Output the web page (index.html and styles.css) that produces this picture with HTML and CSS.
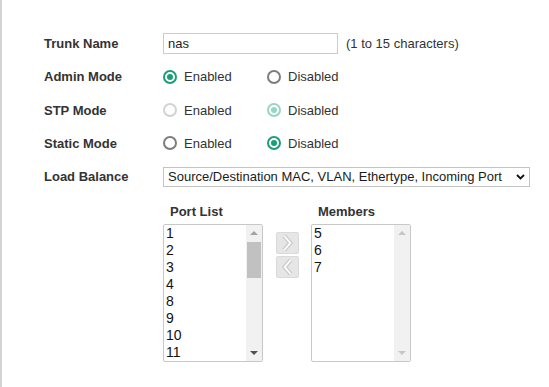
FILE: index.html
```html
<!DOCTYPE html>
<html lang="en">
<head>
    <meta charset="UTF-8">
    <meta name="viewport" content="width=device-width, initial-scale=1.0">
    <title>Trunk Settings</title>
    <link rel="stylesheet" href="styles.css">
</head>
<body>

<div class="page">
    <form class="trunk-form">
        <div class="row">
            <label class="row-label" for="trunk-name">Trunk Name</label>
            <div class="row-field">
                <input type="text" id="trunk-name" class="text-input" value="nas">
                <span class="hint">(1 to 15 characters)</span>
            </div>
        </div>

        <div class="row">
            <span class="row-label">Admin Mode</span>
            <div class="row-field">
                <label class="radio"><span class="radio-dot checked"></span>Enabled</label>
                <label class="radio"><span class="radio-dot"></span>Disabled</label>
            </div>
        </div>

        <div class="row">
            <span class="row-label">STP Mode</span>
            <div class="row-field">
                <label class="radio"><span class="radio-dot faded"></span>Enabled</label>
                <label class="radio"><span class="radio-dot checked faded"></span>Disabled</label>
            </div>
        </div>

        <div class="row">
            <span class="row-label">Static Mode</span>
            <div class="row-field">
                <label class="radio"><span class="radio-dot"></span>Enabled</label>
                <label class="radio"><span class="radio-dot checked"></span>Disabled</label>
            </div>
        </div>

        <div class="row">
            <label class="row-label" for="load-balance">Load Balance</label>
            <div class="row-field">
                <div class="select-wrap">
                    <select id="load-balance" class="select">
                        <option>Source/Destination MAC, VLAN, Ethertype, Incoming Port</option>
                    </select>
                    <svg class="select-arrow" width="9" height="6" viewBox="0 0 9 6">
                        <path d="M1 1 L4.5 4.5 L8 1" fill="none" stroke="#111" stroke-width="1.8"/>
                    </svg>
                </div>
            </div>
        </div>

        <!-- Port list / members transfer -->
        <div class="transfer">
            <div class="list-col">
                <div class="list-title">Port List</div>
                <div class="list-box">
                    <ul class="list-items">
                        <li>1</li>
                        <li>2</li>
                        <li>3</li>
                        <li>4</li>
                        <li>8</li>
                        <li>9</li>
                        <li>10</li>
                        <li>11</li>
                    </ul>
                    <div class="scrollbar">
                        <span class="scroll-up"></span>
                        <span class="scroll-thumb"></span>
                        <span class="scroll-down"></span>
                    </div>
                </div>
            </div>

            <div class="move-buttons">
                <button type="button" class="move-btn" disabled>
                    <svg width="22" height="22" viewBox="0 0 22 22">
                        <path d="M7.5 3.5 L14 11 L7.5 18.5" fill="none" stroke="#c9c9c9" stroke-width="4.5"/>
                        <path d="M7.5 3.5 L14 11 L7.5 18.5" fill="none" stroke="#fafafa" stroke-width="2"/>
                    </svg>
                </button>
                <button type="button" class="move-btn" disabled>
                    <svg width="22" height="22" viewBox="0 0 22 22">
                        <path d="M14.5 3.5 L8 11 L14.5 18.5" fill="none" stroke="#c9c9c9" stroke-width="4.5"/>
                        <path d="M14.5 3.5 L8 11 L14.5 18.5" fill="none" stroke="#fafafa" stroke-width="2"/>
                    </svg>
                </button>
            </div>

            <div class="list-col">
                <div class="list-title">Members</div>
                <div class="list-box">
                    <ul class="list-items">
                        <li>5</li>
                        <li>6</li>
                        <li>7</li>
                    </ul>
                    <div class="scrollbar inactive">
                        <span class="scroll-up"></span>
                        <span class="scroll-down"></span>
                    </div>
                </div>
            </div>
        </div>
    </form>
</div>

</body>
</html>
```

FILE: styles.css
```css
body {
    margin: 0;
    font-family: "Liberation Sans", Arial, sans-serif;
    font-size: 13px;
    color: #333;
    background-color: #ffffff;
}
.page {
    border-left: 2px solid #d4d4d4;
    min-height: 100vh;
    box-sizing: border-box;
}
.trunk-form {
    padding: 27px 0 0 42px;
}
.row {
    display: flex;
    align-items: center;
    height: 33.25px;
}
.row-label {
    width: 119px;
    flex-shrink: 0;
    font-weight: bold;
    color: #333;
}
.row-field {
    display: flex;
    align-items: center;
}
.text-input {
    width: 175px;
    height: 21px;
    box-sizing: border-box;
    border: 1px solid #cccccc;
    padding: 0 4px;
    font-family: inherit;
    font-size: 13px;
    color: #222;
    outline: none;
}
.hint {
    margin-left: 8px;
    color: #333;
}
.radio {
    display: flex;
    align-items: center;
    gap: 7px;
    width: 104px;
    color: #333;
}
.radio-dot {
    width: 14px;
    height: 14px;
    box-sizing: border-box;
    border: 2px solid #7d7d7d;
    border-radius: 50%;
    position: relative;
}
.radio-dot.faded {
    border-color: #d2d2d2;
}
.radio-dot.checked {
    border-color: #1a9e78;
}
.radio-dot.checked::after {
    content: "";
    position: absolute;
    left: 2px;
    top: 2px;
    width: 6px;
    height: 6px;
    border-radius: 50%;
    background-color: #1a9e78;
}
.radio-dot.checked.faded {
    border-color: #96d6c4;
}
.radio-dot.checked.faded::after {
    background-color: #96d6c4;
}
.select-wrap {
    position: relative;
}
.select {
    appearance: none;
    -webkit-appearance: none;
    width: 367px;
    height: 20px;
    box-sizing: border-box;
    border: 1px solid #c4c4c4;
    border-radius: 0;
    background-color: #fff;
    padding: 0 20px 0 4px;
    font-family: inherit;
    font-size: 13px;
    color: #1a1a1a;
    outline: none;
}
.select-arrow {
    position: absolute;
    right: 5px;
    top: 7px;
    pointer-events: none;
}
.transfer {
    display: flex;
    margin-top: 11px;
    padding-left: 119px;
}
.list-col {
    width: 100px;
}
.list-title {
    font-weight: bold;
    color: #333;
    line-height: 15px;
    padding-left: 7px;
    margin-bottom: 5px;
}
.list-box {
    display: flex;
    height: 138px;
    box-sizing: border-box;
    border: 1px solid #c8c8c8;
    border-radius: 2px;
    background-color: #fff;
}
.list-items {
    flex: 1;
    list-style: none;
    margin: 0;
    padding: 0 0 0 2px;
    font-size: 14px;
    color: #111;
}
.list-items li {
    height: 17px;
    line-height: 17px;
}
.scrollbar {
    width: 16px;
    background-color: #f1f1f1;
    display: flex;
    flex-direction: column;
    align-items: center;
}
.scroll-up,
.scroll-down {
    width: 0;
    height: 0;
    border-left: 4px solid transparent;
    border-right: 4px solid transparent;
}
.scroll-up {
    margin-top: 6px;
    border-bottom: 4px solid #a3a3a3;
}
.scroll-down {
    margin-top: auto;
    margin-bottom: 6px;
    border-top: 4px solid #505050;
}
.scroll-thumb {
    width: 14px;
    height: 36px;
    margin-top: 7px;
    background-color: #c1c1c1;
}
.scrollbar.inactive .scroll-up {
    border-bottom-color: #c6c6c6;
}
.scrollbar.inactive .scroll-down {
    border-top-color: #c6c6c6;
}
.move-buttons {
    display: flex;
    flex-direction: column;
    gap: 2px;
    padding-top: 28px;
    margin: 0 12px 0 13px;
}
.move-btn {
    width: 23px;
    height: 22px;
    padding: 0;
    border: 1px solid #dadada;
    border-radius: 2px;
    background-color: #e6e6e6;
    display: flex;
    align-items: center;
    justify-content: center;
}
```
